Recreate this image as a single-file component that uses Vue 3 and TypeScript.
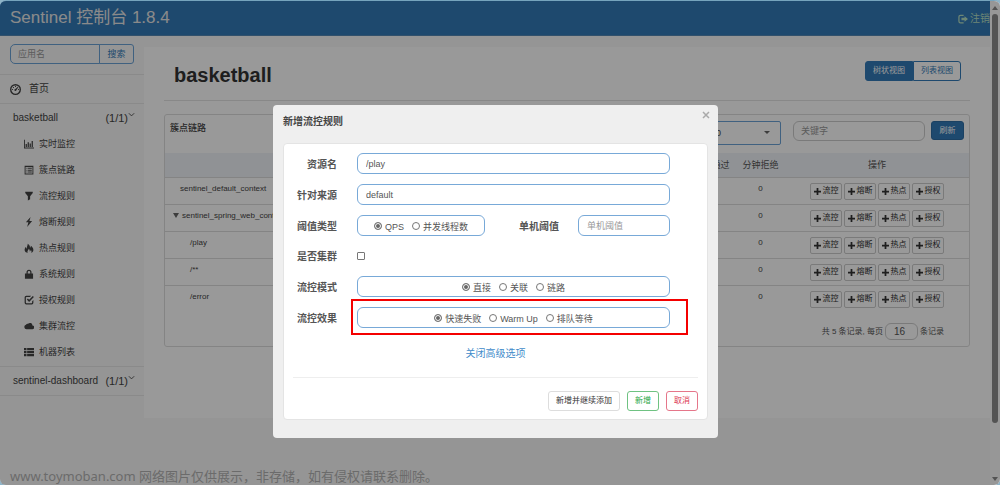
<script setup lang="ts">
import { ref } from 'vue'

interface MenuItem { label: string; icon: string }
interface Resource { name: string; level: number; open?: boolean }

const menu: MenuItem[] = [
  { label: '实时监控', icon: 'M0 1h1.4v12.6H16V15H0zM2.6 8h2v4.600h-2zM5.800 5h2v7.600h-2zM9 7h2v5.600H9zM12.200 3h2v9.600h-2z' },
  { label: '簇点链路', icon: 'M1 1h14v14H1zM2.500 3v10.500h11V3zM4 4.500h1.500V6H4zM6.500 4.500h6V6h-6zM4 7.500h1.500V9H4zM6.500 7.500h6V9h-6zM4 10.500h1.500V12H4zM6.500 10.500h6V12h-6z' },
  { label: '流控规则', icon: 'M2 1h12v2L9.800 8.500V13L6.200 15V8.500L2 3z' },
  { label: '熔断规则', icon: 'M10.500 0 3 8.500h4L5 16l8-9.500H8.700z' },
  { label: '热点规则', icon: 'M6 1c3 2 4 4 3.500 6.500C10.500 7 11 6 11 4.500c3 2.500 4 4.500 4 6.500 0 2.300-1.500 4-3.500 4.500.8-1.500.8-3-.5-4.500-.5 1.500-1 2-2 2.500.5-2-.2-3.500-1.500-4.500 0 2-2 3-2 4.500 0 .8.300 1.500.8 2C3 15 1 13.500 1 11c0-2 1-3.500 2-5 0 1.500.5 2.500 1.500 3C4 6 6 4 6 1z' },
  { label: '系统规则', icon: 'M1.500 7H4V5a4 4 0 0 1 8 0v2h2.500v8.500h-13zM6 7h4V5a2 2 0 0 0-4 0z' },
  { label: '授权规则', icon: 'M3.500 1h8l-2 2H4a1 1 0 0 0-1 1v8a1 1 0 0 0 1 1h8a1 1 0 0 0 1-1v-2l2-2v4.500A2.500 2.500 0 0 1 12.500 15h-9A2.500 2.500 0 0 1 1 12.500v-9A2.500 2.500 0 0 1 3.500 1zM4.500 7l1.700-1.600 2 2L14 1.500 15.800 3.300 8.200 11z' },
  { label: '集群流控', icon: 'M4 13a3.500 3.500 0 0 1-.8-6.900A3 3 0 0 1 6.500 4.500a4 4 0 0 1 7 2.500A3 3 0 0 1 13 13z' },
  { label: '机器列表', icon: 'M0 1.500h4V5H0zM5 1.500h11V5H5zM0 6.300h4v3.500H0zM5 6.300h11v3.500H5zM0 11.100h4v3.500H0zM5 11.100h11v3.500H5z' },
]

const resources: Resource[] = [
  { name: 'sentinel_default_context', level: 1 },
  { name: 'sentinel_spring_web_context', level: 0, open: true },
  { name: '/play', level: 2 },
  { name: '/**', level: 2 },
  { name: '/error', level: 2 },
]
const metrics = ['通过QPS', '拒绝QPS', '并发数', '平均RT', '分钟通过', '分钟拒绝']
const actions = ['流控', '熔断', '热点', '授权']

const app = ref('')
const keyword = ref('')
const machine = ref('127.0.0.1:8720')
const pageSize = ref('16')

const resource = ref('/play')
const origin = ref('default')
const grade = ref('QPS')
const threshold = ref('')
const cluster = ref(false)
const strategy = ref('直接')
const effect = ref('快速失败')
const grades = ['QPS', '并发线程数']
const strategies = ['直接', '关联', '链路']
const effects = ['快速失败', 'Warm Up', '排队等待']
</script>

<template>
  <div class="window">
    <div class="page">
      <header class="topbar">
        <span class="brand">Sentinel 控制台 1.8.4</span>
        <a class="logout" href="#">
          <svg viewBox="0 0 16 16"><path d="M9 1v2H4a1.500 1.500 0 0 0-1.500 1.500v7A1.500 1.500 0 0 0 4 13h5v2H4a3.500 3.500 0 0 1-3.500-3.500v-7A3.500 3.500 0 0 1 4 1zM10.500 3.500 16 8l-5.500 4.500V10H5.500V6h5z" /></svg>注销
        </a>
      </header>
      <div class="body">
        <nav class="sidebar">
          <div class="search">
            <input v-model="app" type="text" placeholder="应用名" aria-label="应用名">
            <button type="button">搜索</button>
          </div>
          <a class="home" href="#">
            <svg viewBox="0 0 16 16"><path fill-rule="evenodd" d="M8 0a8 8 0 1 1 0 16A8 8 0 0 1 8 0zm0 2a6 6 0 1 0 0 12A6 6 0 0 0 8 2zM7.300 3h1.400v1.400H7.300zM4.300 4.300h1.400v1.400H4.300zM3 7.300h1.400v1.400H3zM11.600 7.300H13v1.400h-1.400zM11.500 4l.6.600-2.700 4.200a1.500 1.500 0 1 1-1.600-1.600z" /></svg>首页
          </a>
          <a class="app" href="#"><span class="app-name">basketball</span><span class="count">(1/1)<svg viewBox="0 0 8 8"><path d="M1 2l3 3 3-3" /></svg></span></a>
          <ul class="menu">
            <li v-for="m in menu" :key="m.label">
              <a href="#"><svg viewBox="0 0 16 16"><path fill-rule="evenodd" :d="m.icon" /></svg>{{ m.label }}</a>
            </li>
          </ul>
          <a class="app" href="#"><span class="app-name">sentinel-dashboard</span><span class="count">(1/1)<svg viewBox="0 0 8 8"><path d="M1 2l3 3 3-3" /></svg></span></a>
        </nav>
        <main class="content">
          <div class="heading">
            <h1>basketball</h1>
            <div class="views">
              <button type="button" class="active">树状视图</button><button type="button">列表视图</button>
            </div>
          </div>
          <section class="panel">
            <div class="tools">
              <strong>簇点链路</strong>
              <div class="machine">
                <select v-model="machine" aria-label="机器"><option>127.0.0.1:8720</option></select>
              </div>
              <input v-model="keyword" type="text" placeholder="关键字" aria-label="关键字">
              <button type="button">刷新</button>
            </div>
            <table>
              <colgroup><col><col v-for="m in metrics" :key="m" class="metric"><col class="ops"></colgroup>
              <thead>
                <tr><th>资源名</th><th v-for="m in metrics" :key="m">{{ m }}</th><th>操作</th></tr>
              </thead>
              <tbody>
                <tr v-for="r in resources" :key="r.name">
                  <td :class="['name', 'level-' + r.level]"><span v-if="r.open" class="caret"></span>{{ r.name }}</td>
                  <td v-for="m in metrics" :key="m">0</td>
                  <td class="ops-cell">
                    <div class="actions">
                      <button v-for="a in actions" :key="a" type="button"><svg viewBox="0 0 8 8"><path d="M3 0h2v3h3v2H5v3H3V5H0V3h3z" /></svg>{{ a }}</button>
                    </div>
                  </td>
                </tr>
              </tbody>
            </table>
            <label class="pager">共 5 条记录, 每页 <input v-model="pageSize" type="text"> 条记录</label>
          </section>
        </main>
      </div>
    </div>
    <div class="scrollbar"><i class="up"></i><i class="thumb"></i><i class="down"></i></div>

    <div class="backdrop">
      <form class="dialog" role="dialog" aria-labelledby="dialog-title" @submit.prevent>
        <div class="dialog-head">
          <h2 id="dialog-title">新增流控规则</h2>
          <button type="button" class="close" aria-label="关闭"><svg viewBox="0 0 8 8"><path d="M1 1l6 6M7 1L1 7" /></svg></button>
        </div>
        <div class="card">
          <div class="fields">
            <div class="row"><label for="resource">资源名</label><input id="resource" v-model="resource" type="text"></div>
            <div class="row"><label for="origin">针对来源</label><input id="origin" v-model="origin" type="text"></div>
            <div class="row">
              <span id="grade" class="label">阈值类型</span>
              <div class="pair">
                <div class="options" role="radiogroup" aria-labelledby="grade">
                  <label v-for="o in grades" :key="o"><input v-model="grade" type="radio" name="grade" :value="o">{{ o }}</label>
                </div>
                <label for="threshold">单机阈值</label>
                <input id="threshold" v-model="threshold" type="text" placeholder="单机阈值">
              </div>
            </div>
            <div class="row check"><label for="cluster">是否集群</label><input id="cluster" v-model="cluster" type="checkbox"></div>
            <div class="row">
              <span id="strategy" class="label">流控模式</span>
              <div class="options" role="radiogroup" aria-labelledby="strategy">
                <label v-for="o in strategies" :key="o"><input v-model="strategy" type="radio" name="strategy" :value="o">{{ o }}</label>
              </div>
            </div>
            <div class="row">
              <span id="effect" class="label">流控效果</span>
              <div class="options marked" role="radiogroup" aria-labelledby="effect">
                <label v-for="o in effects" :key="o"><input v-model="effect" type="radio" name="effect" :value="o">{{ o }}</label>
              </div>
            </div>
          </div>
          <a class="advanced" href="#">关闭高级选项</a>
          <div class="buttons">
            <button type="button">新增并继续添加</button>
            <button type="submit" class="add">新增</button>
            <button type="button" class="cancel">取消</button>
          </div>
        </div>
      </form>
    </div>
    <p class="watermark">www.toymoban.com 网络图片仅供展示，非存储，如有侵权请联系删除。</p>
  </div>
</template>

<style>
body { background: #8fb4c8; }
</style>

<style scoped>
* { box-sizing: border-box; }
.window {
  position: relative;
  display: flex;
  min-height: 100vh;
  border-top: 1px solid #76a4bd;
  border-radius: 6px;
  overflow: hidden;
  background: #f8f8f8;
  color: #444;
  font: 9px/14px "Liberation Sans", "Noto Sans CJK SC", sans-serif;
}
button, input, select { margin: 0; font: inherit; color: inherit; outline: none; }
button { padding: 0; cursor: pointer; }
a { color: inherit; text-decoration: none; }
svg { display: block; flex: none; fill: currentColor; }
input::placeholder { color: #999; opacity: 1; }

.page { flex: 1; min-width: 0; display: flex; flex-direction: column; }
.topbar {
  display: flex; justify-content: space-between; align-items: center;
  height: 35px; padding-left: 10px;
  background: #337ab7; border-bottom: 1px solid #5488b5; color: #e7e7e7;
}
.brand { font-size: 17px; line-height: 30px; }
.logout { display: flex; align-items: center; gap: 2px; width: 32px; padding-top: 2px; white-space: nowrap; font-size: 10px; color: #b5dfc3; }
.logout svg { width: 10px; height: 10px; }
.body { display: flex; flex: 1; }

.sidebar { width: 144px; flex: none; }
.search { display: flex; height: 39px; padding: 8px 10px 10px; border-bottom: 1px solid #e7e7e7; }
.search input { flex: 1; min-width: 0; padding: 0 7px; background: none; border: 1px solid #6ba2d6; border-radius: 5px 0 0 5px; }
.search button { width: 35px; margin-left: -1px; background: none; border: 1px solid #6ba2d6; border-radius: 0 3px 3px 0; color: #337ab7; }
.home { display: flex; align-items: center; gap: 8px; height: 29px; padding-left: 10px; border-bottom: 1px solid #e7e7e7; font-size: 10px; }
.home svg { width: 11px; height: 11px; }
.app { display: flex; justify-content: space-between; align-items: center; height: 27px; padding: 0 9px 0 13px; }
.app:last-child { height: 30px; border-top: 1px solid #e7e7e7; border-bottom: 1px solid #e7e7e7; }
.app-name { font-size: 10px; white-space: nowrap; }
.count { display: flex; font-size: 11px; }
.count svg { width: 7px; height: 8px; fill: none; stroke: currentColor; }
.menu { margin: 0; padding: 0 0 1px; list-style: none; }
.menu a { display: flex; align-items: center; gap: 5px; height: 26px; padding-left: 24px; }
.menu svg { width: 10px; height: 10px; }

.content { flex: 1; min-width: 0; height: 371px; margin-top: 11px; padding: 12px 20px 0; background: #fff; }
.heading { display: flex; justify-content: space-between; align-items: flex-start; height: 42px; padding: 2px 9px 0 10px; border-bottom: 1px solid #e3e3e3; }
h1 { margin: 0; font-size: 20px; line-height: 28px; color: #333; }
.views { display: flex; height: 20px; }
.views button { width: 48px; border: 1px solid #337ab7; background: #fff; color: #337ab7; font-size: 8px; border-radius: 0 3px 3px 0; }
.views .active { background: #337ab7; color: #fff; border-radius: 3px 0 0 3px; }
.panel { height: 233px; margin-top: 13px; border: 1px solid #ddd; border-radius: 3px; }
.tools { display: flex; align-items: flex-start; height: 38px; padding: 6px 5px 0; }
.tools strong { flex: 1; font-weight: 500; }
.machine { position: relative; width: 128px; height: 24px; margin-right: 12px; }
.machine::after { content: ""; position: absolute; right: 11px; top: 10px; border: 3px solid transparent; border-top-color: #666; }
.machine select { width: 100%; height: 100%; padding: 0 7px; appearance: none; background: #fff; border: 1px solid #6ba2d6; border-radius: 2px; }
.tools > input { width: 132px; height: 20px; margin-right: 6px; padding: 0 7px; background: #fff; border: 1px solid #ccc; border-radius: 6px; }
.tools > button { width: 33px; height: 19px; border: 1px solid #2e6da4; border-radius: 3px; background: #337ab7; color: #fff; font-size: 8px; }
table { width: 100%; table-layout: fixed; border-collapse: collapse; text-align: center; }
.metric { width: 49px; }
.ops { width: 184px; }
th { height: 24px; padding: 0; background: #f0f4f8; border-bottom: 1px solid #ddd; font-weight: 400; color: #555; }
td { height: 27px; padding: 4px 0; vertical-align: top; border-bottom: 1px solid #ddd; font-size: 8px; }
.ops-cell { padding-top: 5px; }
tbody tr:last-child td { border-bottom: 0; }
.name { text-align: left; }
.level-0 { padding-left: 8px; }
.level-1 { padding-left: 15px; }
.level-2 { padding-left: 25px; }
.caret { display: inline-block; margin-right: 3px; border: 3px solid transparent; border-top: 5px solid #666; border-bottom: 0; }
.actions { display: flex; justify-content: center; gap: 2px; }
.actions button { display: flex; align-items: center; justify-content: center; gap: 2px; width: 32px; height: 17px; background: #fff; border: 1px solid #ccc; border-radius: 2px; color: #333; line-height: 12px; }
.actions svg { width: 7px; height: 7px; }
.pager { display: flex; justify-content: flex-end; align-items: center; gap: 2px; padding: 11px 25px 0 0; font-size: 8px; color: #555; }
.pager input { width: 33px; height: 17px; padding: 0 8px; font-size: 10px; background: #fff; border: 1px solid #ccc; border-radius: 6px; }

.scrollbar { display: flex; flex-direction: column; align-items: center; width: 10px; padding: 5px 0 4px; background: #fcfcfc; }
.up { border: 3px solid transparent; border-bottom: 4px solid #8a8a8a; border-top: 0; }
.thumb { width: 6px; height: 409px; margin-top: 4px; background: #8a8a8a; border-radius: 3px; }
.down { margin-top: auto; border: 3px solid transparent; border-top: 4px solid #8a8a8a; border-bottom: 0; }

.backdrop { position: absolute; inset: 0; display: flex; justify-content: center; align-items: flex-start; padding: 104px 9px 0 0; background: rgba(0, 0, 0, .4); }
.dialog { width: 445px; padding: 0 10px 18px; background: #efefef; border-radius: 4px; color: #555; }
.dialog-head { display: flex; justify-content: space-between; height: 38px; }
h2 { margin: 0; padding-top: 10px; font-size: 10px; line-height: 14px; color: #444; }
.close { width: 12px; height: 12px; margin: 4px -4px 0 0; border: 0; background: none; color: #aaa; }
.close svg { width: 8px; height: 8px; margin: 2px; fill: none; stroke: currentColor; stroke-width: 1.500; }
.card { padding: 9px 9px 8px; background: #fff; border: 1px solid #e4e4e4; border-radius: 4px; }
.fields { display: grid; gap: 10px; padding-right: 28px; }
.row { display: grid; grid-template-columns: 44px 1fr; column-gap: 20px; align-items: center; height: 21px; }
.row > label, .row > .label, .pair > label { font-size: 10px; font-weight: 700; text-align: right; padding-top: 2px; }
.fields input[type="text"], .options { width: 100%; height: 21px; padding: 0 8px; background: #fff; border: 1px solid #78a9d8; border-radius: 6px; }
.pair { display: grid; grid-template-columns: 128px 1fr 92px; column-gap: 19px; align-items: center; }
.options { position: relative; display: flex; justify-content: center; align-items: center; gap: 8px; }
.options label { display: flex; align-items: center; gap: 3px; padding-top: 2px; }
input[type="radio"] { width: 8px; height: 8px; margin-bottom: 2px; appearance: none; border: 1px solid #777; border-radius: 50%; background: #fff; }
input[type="radio"]:checked { background: #666; box-shadow: inset 0 0 0 1px #fff; }
.check { height: 20px; }
.check input { width: 8px; height: 8px; margin: 0; appearance: none; border: 1px solid #777; border-radius: 1px; }
.marked::after { content: ""; position: absolute; inset: -9px -19px -8px -7px; border: 2px solid #f40000; pointer-events: none; }
.advanced { display: block; width: max-content; margin: 19px auto 16px; font-size: 10px; color: #428bca; }
.buttons { display: flex; justify-content: flex-end; gap: 7px; padding-top: 13px; border-top: 1px solid #eee; }
.buttons button { height: 20px; padding: 0 7px; background: #fff; border: 1px solid #ddd; border-radius: 3px; font-size: 8px; line-height: 14px; color: #333; }
.buttons .add { border-color: #6fc282; color: #28a745; }
.buttons .cancel { border-color: #e5768a; color: #dc3550; }

.watermark { position: absolute; left: 10px; bottom: 0; margin: 0; font: 13px/18px "Noto Sans", "Noto Sans CJK SC", sans-serif; color: #6b6b6b; }
</style>
